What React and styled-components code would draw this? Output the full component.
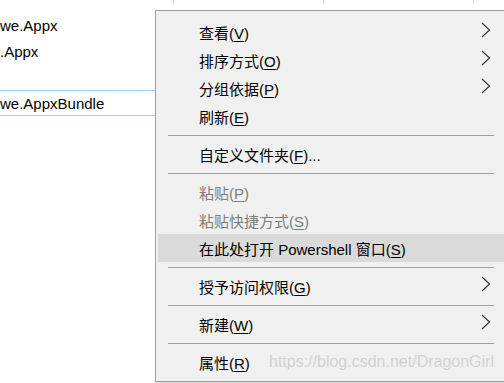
import styled, { createGlobalStyle } from "styled-components";

const GlobalStyle = createGlobalStyle`
  html, body {
    margin: 0;
    padding: 0;
    background: #fff;
    overflow: hidden;
  }
  body {
    width: 504px;
    height: 383px;
    font-family: "Liberation Sans", "Noto Sans CJK SC", sans-serif;
  }
`;

const Page = styled.div`
  position: relative;
  width: 504px;
  height: 383px;
  background: #fff;
  overflow: hidden;
`;

const Header = styled.div`
  display: flex;
  height: 4px;
  margin-bottom: 8px;
`;

const HeaderCell = styled.div`
  width: ${(p) => p.w}px;
  flex-shrink: 0;
  border-right: 1px solid #e3e3e3;
  box-sizing: border-box;
`;

const FileRow = styled.div`
  height: 26px;
  box-sizing: border-box;
  display: flex;
  align-items: center;
  font-size: 15px;
  color: #000;
  border-top: 1px solid ${(p) => (p.selected ? "#99d1ff" : "transparent")};
  border-bottom: 1px solid ${(p) => (p.selected ? "#99d1ff" : "transparent")};
  white-space: nowrap;
`;

const Menu = styled.div`
  position: absolute;
  left: 155px;
  top: 10px;
  width: 352px;
  height: 372px;
  box-sizing: border-box;
  background: #f0f0f0;
  border: 1px solid #a0a0a0;
  padding: 7px 0 5px 2px;
  display: flex;
  flex-direction: column;
  box-shadow: 2px 2px 3px rgba(0, 0, 0, 0.2);
`;

const Item = styled.div`
  position: relative;
  height: 28px;
  flex-shrink: 0;
  display: flex;
  align-items: center;
  padding-left: 41px;
  padding-right: 12px;
  font-size: 15px;
  color: ${(p) => (p.disabled ? "#7d7d7d" : "#000")};
  background: ${(p) => (p.active ? "#dadada" : "transparent")};
  white-space: nowrap;

  u {
    text-decoration-thickness: 1px;
    text-underline-offset: 2px;
  }
`;

const Label = styled.span`
  flex: 1;
`;

const Chevron = styled.svg`
  width: 10px;
  height: 16px;
  margin-top: -5px;
  margin-right: 3px;
`;

const Separator = styled.div`
  height: 10px;
  flex-shrink: 0;
  display: flex;
  align-items: center;
  padding: 0 12px 0 10px;

  &::after {
    content: "";
    flex: 1;
    height: 1px;
    background: #a0a0a0;
  }
`;

const Watermark = styled.span`
  position: absolute;
  right: 12px;
  top: 5px;
  font-family: "Liberation Sans", sans-serif;
  font-size: 16px;
  color: #d2d2d2;
`;

const Arrow = () => (
  <Chevron viewBox="0 0 10 16">
    <polyline points="1,1 8.5,8 1,15" fill="none" stroke="#333" strokeWidth="1.1" />
  </Chevron>
);

const entries = [
  { label: "查看", key: "V", sub: true },
  { label: "排序方式", key: "O", sub: true },
  { label: "分组依据", key: "P", sub: true },
  { label: "刷新", key: "E" },
  "sep",
  { label: "自定义文件夹", key: "F", tail: "..." },
  "sep",
  { label: "粘贴", key: "P", disabled: true },
  { label: "粘贴快捷方式", key: "S", disabled: true },
  { label: "在此处打开 Powershell 窗口", key: "S", active: true },
  "sep",
  { label: "授予访问权限", key: "G", sub: true },
  "sep",
  { label: "新建", key: "W", sub: true },
  "sep",
  { label: "属性", key: "R", mark: true },
];

export default function App() {
  return (
    <Page>
      <GlobalStyle />
      <Header>
        <HeaderCell w={174} />
        <HeaderCell w={150} />
        <HeaderCell w={150} />
      </Header>
      <FileRow>we.Appx</FileRow>
      <FileRow>.Appx</FileRow>
      <FileRow />
      <FileRow selected>we.AppxBundle</FileRow>

      <Menu>
        {entries.map((e, i) =>
          e === "sep" ? (
            <Separator key={i} />
          ) : (
            <Item key={i} disabled={e.disabled} active={e.active}>
              <Label>
                {e.label}(<u>{e.key}</u>){e.tail}
              </Label>
              {e.sub && <Arrow />}
              {e.mark && <Watermark>https://blog.csdn.net/DragonGirl</Watermark>}
            </Item>
          )
        )}
      </Menu>
    </Page>
  );
}
